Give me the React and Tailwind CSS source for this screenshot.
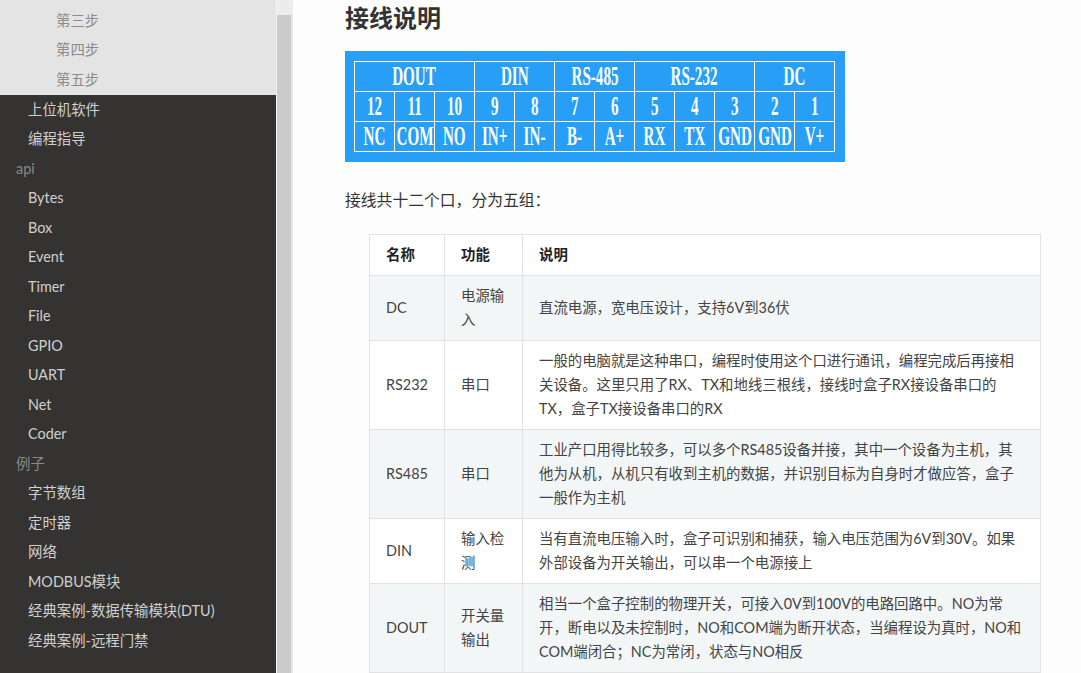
import React from "react";

const cjk = { fontFamily: 'Lato, "Noto Sans CJK SC", sans-serif' };

function SideItem({ children, level = 1 }) {
  const cls =
    level === 0
      ? "pl-[16px] text-[#8a8a8a]"
      : level === 2
      ? "pl-[56px] text-[#8b8b8b]"
      : "pl-[28px] text-[#cfcfcf]";
  return (
    <div className={`h-[29.5px] flex items-center text-[14.4px] whitespace-nowrap ${cls}`}>
      {children}
    </div>
  );
}

function Sidebar() {
  return (
    <div className="w-[276px] shrink-0 h-full bg-[#353331] flex flex-col">
      <div className="bg-[#e4e4e4] pt-[6px] h-[95px]">
        <SideItem level={2}>第三步</SideItem>
        <SideItem level={2}>第四步</SideItem>
        <SideItem level={2}>第五步</SideItem>
      </div>
      <SideItem>上位机软件</SideItem>
      <SideItem>编程指导</SideItem>
      <SideItem level={0}>api</SideItem>
      <SideItem>Bytes</SideItem>
      <SideItem>Box</SideItem>
      <SideItem>Event</SideItem>
      <SideItem>Timer</SideItem>
      <SideItem>File</SideItem>
      <SideItem>GPIO</SideItem>
      <SideItem>UART</SideItem>
      <SideItem>Net</SideItem>
      <SideItem>Coder</SideItem>
      <SideItem level={0}>例子</SideItem>
      <SideItem>字节数组</SideItem>
      <SideItem>定时器</SideItem>
      <SideItem>网络</SideItem>
      <SideItem>MODBUS模块</SideItem>
      <SideItem>经典案例-数据传输模块(DTU)</SideItem>
      <SideItem>经典案例-远程门禁</SideItem>
    </div>
  );
}

function Scrollbar() {
  return (
    <div className="w-[17px] shrink-0 h-full border-l border-[#f4f4f4] bg-[#cbcbcb] flex flex-col">
      <div className="h-[15px] bg-[#ececec]" />
      <div className="flex-1 border-r-2 border-[#e6e6e6]" />
    </div>
  );
}

const wiring = {
  groups: [
    ["DOUT", 3],
    ["DIN", 2],
    ["RS-485", 2],
    ["RS-232", 3],
    ["DC", 2],
  ],
  nums: ["12", "11", "10", "9", "8", "7", "6", "5", "4", "3", "2", "1"],
  names: ["NC", "COM", "NO", "IN+", "IN-", "B-", "A+", "RX", "TX", "GND", "GND", "V+"],
};

const spanCls = { 2: "col-span-2", 3: "col-span-3" };

function WiringDiagram() {
  const cell =
    "h-[30px] flex items-center justify-center overflow-hidden border-r border-b border-[#fff6e2] text-white font-bold text-[27px] leading-none";
  const txt = { fontFamily: '"Liberation Serif", serif', transform: "scaleX(0.56)", display: "inline-block", whiteSpace: "nowrap" };
  return (
    <div className="w-[500px] h-[111px] bg-[#279ff6] pt-[10px] pl-[9px]">
      <div className="w-[481px] grid grid-cols-[repeat(12,40px)] border-l border-t border-[#fff6e2]">
        {wiring.groups.map(([g, s]) => (
          <div key={g} className={`${cell} ${spanCls[s]}`}>
            <span style={txt}>{g}</span>
          </div>
        ))}
        {wiring.nums.map((n) => (
          <div key={"n" + n} className={cell}>
            <span style={txt}>{n}</span>
          </div>
        ))}
        {wiring.names.map((n, i) => (
          <div key={"m" + i} className={cell}>
            <span style={txt}>{n}</span>
          </div>
        ))}
      </div>
    </div>
  );
}

const rows = [
  ["DC", "电源输入", "直流电源，宽电压设计，支持6V到36伏"],
  ["RS232", "串口", "一般的电脑就是这种串口，编程时使用这个口进行通讯，编程完成后再接相关设备。这里只用了RX、TX和地线三根线，接线时盒子RX接设备串口的TX，盒子TX接设备串口的RX"],
  ["RS485", "串口", "工业产口用得比较多，可以多个RS485设备并接，其中一个设备为主机，其他为从机，从机只有收到主机的数据，并识别目标为自身时才做应答，盒子一般作为主机"],
  ["DIN", "输入检测", "当有直流电压输入时，盒子可识别和捕获，输入电压范围为6V到30V。如果外部设备为开关输出，可以串一个电源接上"],
  ["DOUT", "开关量输出", "相当一个盒子控制的物理开关，可接入0V到100V的电路回路中。NO为常开，断电以及未控制时，NO和COM端为断开状态，当编程设为真时，NO和COM端闭合；NC为常闭，状态与NO相反"],
];

function InfoTable() {
  const td = "border border-[#e2e2e2] px-[16px] py-[8px] align-middle leading-[24px]";
  return (
    <table className="w-[672px] border-collapse text-[14.4px] text-[#444] ml-[24px] table-fixed">
      <colgroup>
        <col className="w-[75px]" />
        <col className="w-[78px]" />
        <col />
      </colgroup>
      <thead>
        <tr className="bg-white">
          <th className={`${td} text-left font-bold text-[#222]`}>名称</th>
          <th className={`${td} text-left font-bold text-[#222]`}>功能</th>
          <th className={`${td} text-left font-bold text-[#222]`}>说明</th>
        </tr>
      </thead>
      <tbody>
        {rows.map((r, i) => (
          <tr key={r[0]} className={i % 2 === 0 ? "bg-[#f3f6f7]" : "bg-white"}>
            <td className={td}>{r[0]}</td>
            <td className={td}>{r[1]}</td>
            <td className={td}>{r[2]}</td>
          </tr>
        ))}
      </tbody>
    </table>
  );
}

export default function App() {
  return (
    <div className="w-[1081px] h-[673px] flex overflow-hidden bg-[#fdfdfd]" style={cjk}>
      <Sidebar />
      <Scrollbar />
      <div className="flex-1 pl-[52px] pt-[4px] text-[#333] overflow-hidden">
        <h2 className="text-[24px] font-bold leading-[28px] text-[#333]">接线说明</h2>
        <div className="mt-[19px]">
          <WiringDiagram />
        </div>
        <p className="mt-[26px] text-[15.8px] leading-[24px]">接线共十二个口，分为五组：</p>
        <div className="mt-[22px]">
          <InfoTable />
        </div>
      </div>
    </div>
  );
}
